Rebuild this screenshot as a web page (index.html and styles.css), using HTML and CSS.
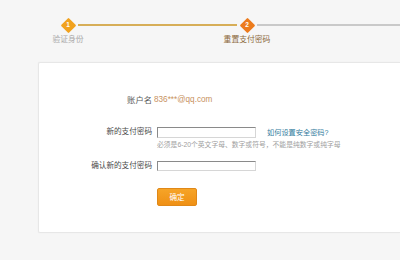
FILE: index.html
```html
<!DOCTYPE html>
<html lang="zh-CN">
<head>
<meta charset="utf-8">
<title>重置支付密码</title>
<link rel="stylesheet" href="styles.css">
</head>
<body>
<div class="steps">
  <div class="pad"></div>
  <div class="node done"><span>1</span></div>
  <div class="line done"></div>
  <div class="node current"><span>2</span></div>
  <div class="line todo"></div>
  <div class="pad"></div>
  <div class="label done">验证身份</div>
  <div class="gapcell"></div>
  <div class="label current">重置支付密码</div>
  <div class="gapcell"></div>
</div>
<div class="card">
  <div class="form">
    <div class="row first">
      <div class="lbl">账户名</div>
      <div class="val">836***@qq.com</div>
    </div>
    <div class="row second">
      <div class="lbl">新的支付密码</div>
      <div class="field">
        <input class="inp" type="password">
        <a class="help" href="#">如何设置安全密码?</a>
      </div>
    </div>
    <div class="row hintrow">
      <div class="lbl"></div>
      <div class="hint">必须是6-20个英文字母、数字或符号，不能是纯数字或纯字母</div>
    </div>
    <div class="row third">
      <div class="lbl">确认新的支付密码</div>
      <div class="field">
        <input class="inp" type="password">
      </div>
    </div>
    <div class="row btnrow">
      <div class="lbl"></div>
      <div class="field">
        <button class="btn" type="button">确定</button>
      </div>
    </div>
  </div>
</div>
</body>
</html>
```
FILE: styles.css
```css
html, body {
  margin: 0;
  padding: 0;
  overflow: hidden;
  background: #f6f6f6;
  font-family: "Liberation Sans", "Noto Sans CJK SC", sans-serif;
}
body {
  width: 400px;
  height: 260px;
}
.steps {
  display: grid;
  grid-template-columns: 60px 16px 163px 16px 1fr;
  grid-template-rows: 16px 12px;
  padding-top: 17px;
  height: 45px;
  box-sizing: border-box;
}
.node {
  width: 16px;
  height: 16px;
  display: flex;
  align-items: center;
  justify-content: center;
  position: relative;
}
.node::before {
  content: "";
  position: absolute;
  left: 2.5px;
  top: 2.5px;
  width: 11px;
  height: 11px;
  transform: rotate(45deg);
  border-radius: 1px;
}
.node.done::before { background: #f1a21e; }
.node.current::before { background: #ec7b1d; }
.node span {
  position: relative;
  color: #fff;
  font-size: 6.5px;
  font-weight: bold;
  line-height: 1;
}
.line {
  height: 2px;
  align-self: center;
  margin: 0 2px;
}
.line.done { background: #d7ae58; }
.line.todo { background: #c9c9c9; margin-right: 0; }
.label {
  display: flex;
  justify-content: center;
  white-space: nowrap;
  font-size: 7.8px;
  line-height: 12px;
  padding-top: 1px;
}
.label.done { color: #a9a9a9; }
.label.current { color: #8d6a3c; }
.card {
  margin-left: 38px;
  margin-top: 17px;
  height: 171px;
  box-sizing: border-box;
  background: #fff;
  border: 1px solid #e7e7e7;
  border-right: none;
  border-radius: 2px 0 0 2px;
  box-shadow: 0 0 2px rgba(0,0,0,0.04);
}
.form {
  padding-top: 31px;
  display: flex;
  flex-direction: column;
}
.row {
  display: grid;
  grid-template-columns: 113px 1fr;
  column-gap: 2px;
  align-items: center;
}
.lbl {
  text-align: right;
  font-size: 7.6px;
  color: #4a4a4a;
  white-space: nowrap;
  line-height: 12px;
}
.first .lbl { font-size: 8.3px; color: #5a5a5a; }
.val {
  font-size: 8.2px;
  color: #c8925f;
  line-height: 12px;
}
.second { margin-top: 20px; }
.field {
  display: flex;
  align-items: center;
  padding-left: 3px;
}
.inp {
  width: 99px;
  height: 10px;
  box-sizing: border-box;
  margin: 0;
  padding: 0;
  border: 1px solid;
  border-color: #8a8a8a #d6d6d6 #d6d6d6 #8a8a8a;
  background: #fff;
  outline: none;
}
.second .inp { height: 11px; }
.help {
  margin-left: 11px;
  font-size: 7.2px;
  color: #2f7a9c;
  text-decoration: none;
  white-space: nowrap;
}
.hintrow .hint {
  padding-left: 3px;
  font-size: 6.8px;
  color: #a0a0a0;
  white-space: nowrap;
  line-height: 12px;
}
.hintrow { margin-top: 1px; }
.third { margin-top: 9px; }
.btnrow { margin-top: 16px; }
.btn {
  width: 40px;
  height: 18px;
  margin: 0;
  padding: 0;
  border: 1px solid #e08818;
  border-radius: 2px;
  background: linear-gradient(#f6a427, #ef9015);
  color: #fff;
  font-family: "Noto Sans CJK SC", sans-serif;
  font-size: 7.6px;
  line-height: 16px;
}
```
